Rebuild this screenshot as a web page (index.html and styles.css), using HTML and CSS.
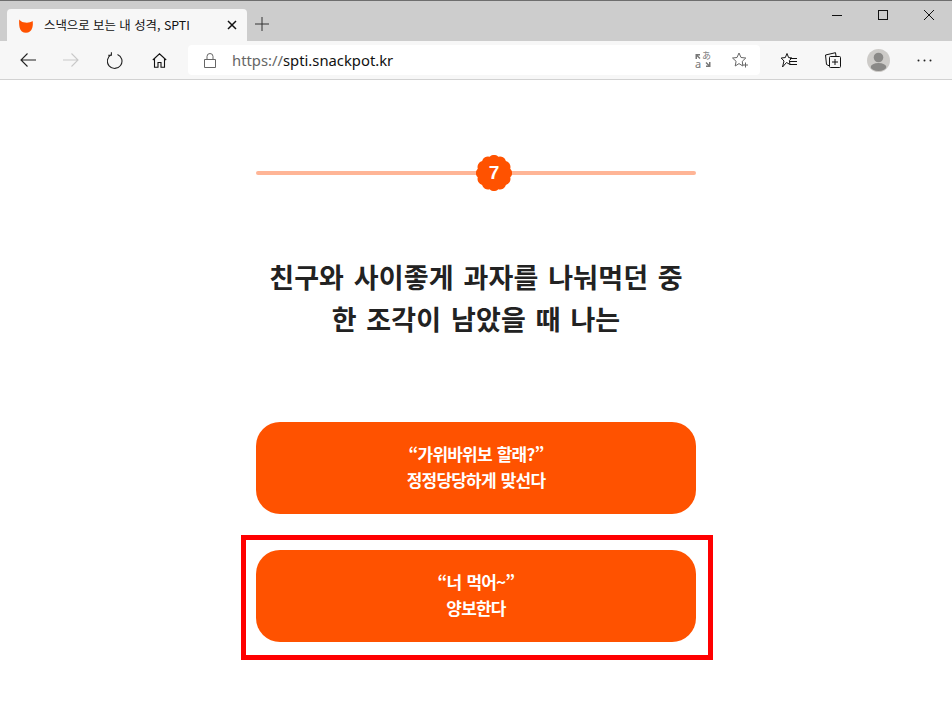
FILE: index.html
```html
<!DOCTYPE html>
<html lang="ko">
<head>
<meta charset="utf-8">
<title>스낵으로 보는 내 성격, SPTI</title>
<link rel="stylesheet" href="styles.css">
</head>
<body>
<header class="chrome">
  <div class="tabstrip">
    <div class="tab">
      <svg class="favicon" width="16" height="16" viewBox="0 0 16 16"><path d="M1.200 1.500C2.500 3 3.800 4 5.500 4.300 8.500 4.900 12 4.900 14.600 3 15 5 15 7.500 14.300 9.800 13.300 13 11 14.800 8 14.800 4.800 14.800 2.300 12.800 1.600 9.500 1.100 7 1 4 1.200 1.500Z" fill="#ff5200"/></svg>
      <span class="tab-title">스낵으로 보는 내 성격, SPTI</span>
      <svg class="tab-close" width="10" height="10" viewBox="0 0 10 10"><path d="M1 1 9 9M9 1 1 9" stroke="#111" stroke-width="1.5" fill="none"/></svg>
    </div>
    <svg class="new-tab" width="14" height="14" viewBox="0 0 14 14"><path d="M7 0V14M0 7H14" stroke="#333" stroke-width="1" fill="none"/></svg>
    <div class="window-controls">
      <svg width="10" height="10" viewBox="0 0 10 10"><path d="M0 5.500H10" stroke="#111" fill="none"/></svg>
      <svg width="10" height="10" viewBox="0 0 10 10"><rect x=".5" y=".5" width="9" height="9" stroke="#111" fill="none"/></svg>
      <svg width="10" height="10" viewBox="0 0 10 10"><path d="M0 0 10 10M10 0 0 10" stroke="#111" fill="none"/></svg>
    </div>
  </div>
  <div class="toolbar">
    <svg class="tool back" width="16" height="14" viewBox="0 0 16 14"><path d="M16 7H1M7.500 .5 1 7l6.500 6.500" stroke="#222" stroke-width="1.100" fill="none"/></svg>
    <svg class="tool forward" width="16" height="14" viewBox="0 0 16 14"><path d="M0 7H15M8.500 .5 15 7l-6.500 6.500" stroke="#c9c9c9" stroke-width="1.100" fill="none"/></svg>
    <svg class="tool reload" width="16" height="17" viewBox="0 0 16 17"><path d="M10.500 2.400A7.300 7.300 0 1 1 4.400 2.600M4.400 .2V3.200H1.200" stroke="#222" stroke-width="1.100" fill="none"/></svg>
    <svg class="tool home" width="15" height="15" viewBox="0 0 15 15"><path d="M.8 7 7.500 .8 14.200 7M2.500 5.800V14.300H6V9.500H9V14.300H12.500V5.800" stroke="#111" stroke-width="1.100" fill="none"/></svg>
    <div class="address">
      <svg class="lock" width="12" height="15" viewBox="0 0 12 15"><path d="M.5 6.500H11.500V14.500H.5ZM3 6.500V3.500A3 3 0 0 1 9 3.500V6.500" stroke="#666" fill="none"/></svg>
      <span class="url"><span class="scheme">https://</span>spti.snackpot.kr</span>
      <div class="translate">
        <svg width="16" height="16" viewBox="0 0 16 16"><path d="M.5 2 5 2 5 3.500 3 3.500 5.500 6 4.500 7 2 4.500 2 7 .5 7ZM15.500 15 11 15 11 13.500 13 13.500 10.500 11 11.500 10 14 12.500 14 10 15.500 10Z" fill="#777"/></svg>
        <span class="translate-kana">あ</span>
        <span class="translate-latin">a</span>
      </div>
      <svg class="addfav" width="16" height="16" viewBox="0 0 16 16"><path d="M7 1 9 5.500 13.800 6 10.300 9.300 10.800 14 7 11.600 3.200 14 4.100 9.300.5 6 5 5.500Z" stroke="#666" fill="none"/><path d="M11 13H16M13.500 10.500V15.500" stroke="#666" fill="#f7f7f7"/></svg>
    </div>
    <svg class="tool favs" width="16" height="15" viewBox="0 0 16 15"><path d="M6 .5 7.600 4.600 11 5 8.300 7.500 9 11.500 5.500 9.500 1.500 14 3 8 .2 5 4.300 4.600Z" stroke="#111" fill="#fff"/><path d="M9 5.500H16M9 8.500H16M9 11.500H16" stroke="#111" fill="none"/></svg>
    <svg class="tool collections" width="16" height="16" viewBox="0 0 16 16"><path d="M4.500 14 1.500 12.500.5 3 10.500.7 11 4" stroke="#111" fill="none"/><rect x="4.500" y="4.500" width="11" height="11" rx="1" stroke="#111" fill="#f7f7f7"/><path d="M10 7V13M7 10H13" stroke="#111" fill="none"/></svg>
    <svg class="tool avatar" width="23" height="23" viewBox="0 0 23 23"><circle cx="11.500" cy="11.500" r="11.500" fill="#cdcbc8"/><circle cx="11.500" cy="8.500" r="4.800" fill="#8a8987"/><ellipse cx="11.500" cy="18" rx="7.800" ry="4" fill="#8a8987"/></svg>
    <svg class="tool more" width="15" height="3" viewBox="0 0 15 3"><circle cx="1.500" cy="1.500" r="1" fill="#222"/><circle cx="7.500" cy="1.500" r="1" fill="#222"/><circle cx="13.500" cy="1.500" r="1" fill="#222"/></svg>
  </div>
</header>
<main class="page">
  <div class="progress">
    <div class="track"></div>
    <div class="badge">
      <svg class="badge-shape" width="36" height="36" viewBox="0 0 36 36"><path fill="#ff5200" d="M34.230 13.650A6 6 0 0 1 34.230 22.350A6 6 0 0 1 29.880 29.880A6 6 0 0 1 22.350 34.230A6 6 0 0 1 13.650 34.230A6 6 0 0 1 6.120 29.880A6 6 0 0 1 1.770 22.350A6 6 0 0 1 1.770 13.650A6 6 0 0 1 6.120 6.120A6 6 0 0 1 13.650 1.770A6 6 0 0 1 22.350 1.770A6 6 0 0 1 29.880 6.120A6 6 0 0 1 34.230 13.650Z"/></svg>
      <span class="badge-num">7</span>
    </div>
  </div>
  <h1 class="question">친구와 사이좋게 과자를 나눠먹던 중<br>한 조각이 남았을 때 나는</h1>
  <div class="answers">
    <button class="answer">“가위바위보 할래?”<br>정정당당하게 맞선다</button>
    <button class="answer">“너 먹어~”<br>양보한다</button>
  </div>
</main>
<div class="highlight"></div>
</body>
</html>
```
FILE: styles.css
```css
* { box-sizing: border-box; }
html, body { margin: 0; padding: 0; height: 100%; background: #fff; overflow: hidden; }
body { font-family: "Noto Sans CJK KR", "Noto Sans", sans-serif; position: relative; }
.chrome { height: 80px; display: flex; flex-direction: column; }
.tabstrip { height: 41px; background: #cdcdcd; border-top: 1px solid #6e6e6e; display: flex; align-items: flex-end; position: relative; }
.tab { width: 240px; height: 32px; margin-left: 7px; background: #f7f7f7; border-radius: 4px 4px 0 0; display: flex; align-items: center; padding-left: 11px; }
.favicon { flex: none; margin-top: 1px; }
.tab-title { font: 12.4px/16px "Noto Sans CJK KR", sans-serif; color: #111; margin-left: 10px; width: 170px; white-space: nowrap; }
.tab-close { margin-left: 13px; flex: none; }
.new-tab { margin: 0 0 10px 8px; }
.window-controls { position: absolute; top: 9px; right: 18px; display: flex; gap: 36px; }
.toolbar { flex: 1; background: #f7f7f7; border-bottom: 1px solid #d2d2d2; display: flex; align-items: center; }
.tool { flex: none; }
.back { margin-left: 20px; }
.forward { margin-left: 27px; }
.reload { margin-left: 28px; }
.home { margin-left: 29px; }
.address { width: 572px; height: 30px; margin-left: 21px; background: #fff; border-radius: 4px; display: flex; align-items: center; padding-left: 16px; }
.lock { flex: none; }
.url { font: 14.8px/20px "Noto Sans", sans-serif; color: #111; margin-left: 16px; flex: 1; white-space: nowrap; }
.scheme { color: #666; }
.translate { flex: none; width: 16px; height: 16px; margin-right: 21px; position: relative; }
.translate svg { display: block; }
.translate-kana { position: absolute; left: 7px; top: -1px; font: 9px/10px "Noto Sans CJK JP", sans-serif; color: #777; }
.translate-latin { position: absolute; left: 0; top: 7px; font: 11px/10px "Noto Sans", sans-serif; color: #777; }
.addfav { flex: none; margin-right: 12px; }
.favs { margin-left: 21px; }
.collections { margin-left: 28px; }
.avatar { margin-left: 26px; }
.more { margin-left: 27px; }
.page { width: 440px; margin: 0 auto; display: flex; flex-direction: column; }
.progress { height: 36px; margin-top: 75px; position: relative; display: flex; align-items: center; }
.track { width: 100%; height: 4px; border-radius: 2px; background: #ffb596; }
.badge { position: absolute; left: 220px; top: 0; width: 36px; height: 36px; display: flex; align-items: center; justify-content: center; }
.badge-shape { position: absolute; inset: 0; }
.badge-num { position: relative; font: 700 19px/20px "Liberation Sans", sans-serif; color: #fff; }
.question { margin: 65px 0 0; text-align: center; font-size: 27px; line-height: 42px; font-weight: 700; color: #222; white-space: nowrap; word-spacing: 2px; letter-spacing: 0.15px; }
.answers { margin-top: 82px; display: flex; flex-direction: column; gap: 36px; }
.answer { height: 92px; border: 0; border-radius: 24px; background: #ff5200; color: #fff; font: 700 17px/26px "Noto Sans CJK KR", sans-serif; letter-spacing: -0.8px; word-spacing: 1px; padding: 0 0 2px; }
.highlight { position: absolute; left: 241px; top: 535px; width: 472px; height: 125px; border: 5px solid #f00; }
```
